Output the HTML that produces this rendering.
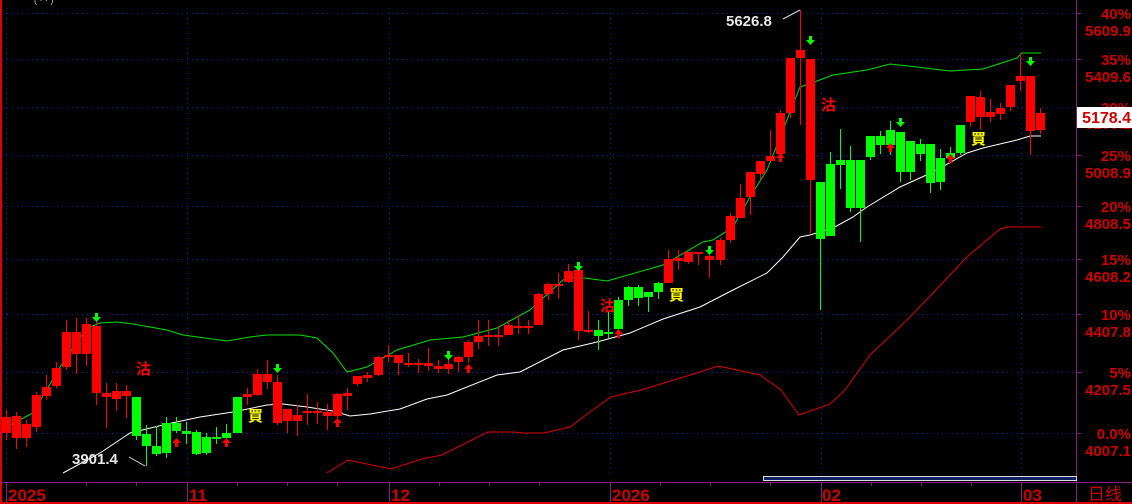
<!DOCTYPE html>
<html><head><meta charset="utf-8"><style>
html,body{margin:0;padding:0;background:#000;width:1132px;height:504px;overflow:hidden}
svg{display:block}
.ax{font-family:"Liberation Sans","Noto Sans CJK SC",sans-serif;font-weight:bold;font-size:15px;fill:#d00000}
.lb{font-family:"Liberation Sans",sans-serif;font-weight:bold;font-size:15px;fill:#e8e8e8}
.cj{font-family:"Noto Sans CJK SC","WenQuanYi Zen Hei",sans-serif;font-weight:bold;font-size:15px}
</style></head><body>
<svg width="1132" height="504" viewBox="0 0 1132 504" xmlns="http://www.w3.org/2000/svg">
<rect width="1132" height="504" fill="#000"/>
<g stroke="#1a1aa8" stroke-width="1" stroke-dasharray="1,4">
<line x1="2" y1="13.5" x2="1076" y2="13.5"/><line x1="2" y1="59.5" x2="1076" y2="59.5"/><line x1="2" y1="107.5" x2="1076" y2="107.5"/>
<line x1="2" y1="155.5" x2="1076" y2="155.5"/><line x1="2" y1="206.5" x2="1076" y2="206.5"/><line x1="2" y1="259.5" x2="1076" y2="259.5"/>
<line x1="2" y1="314.5" x2="1076" y2="314.5"/><line x1="2" y1="372.5" x2="1076" y2="372.5"/><line x1="2" y1="433.5" x2="1076" y2="433.5"/>
<line x1="6.5" y1="8" x2="6.5" y2="476"/><line x1="187.5" y1="8" x2="187.5" y2="476"/><line x1="389.5" y1="8" x2="389.5" y2="476"/>
<line x1="610.5" y1="8" x2="610.5" y2="476"/><line x1="821.5" y1="8" x2="821.5" y2="476"/><line x1="1021.5" y1="8" x2="1021.5" y2="476"/>
</g>
<rect x="0" y="0" width="2" height="504" fill="#e00000"/>
<rect x="0" y="502" width="1132" height="2" fill="#e00000"/>
<line x1="1076.5" y1="0" x2="1076.5" y2="504" stroke="#8a1a8a"/>
<line x1="0" y1="482.5" x2="1132" y2="482.5" stroke="#8a1a8a"/>
<g stroke="#8a1a8a"><line x1="1077" y1="13.5" x2="1081" y2="13.5"/><line x1="1077" y1="59.5" x2="1081" y2="59.5"/><line x1="1077" y1="107.5" x2="1081" y2="107.5"/><line x1="1077" y1="155.5" x2="1081" y2="155.5"/><line x1="1077" y1="206.5" x2="1081" y2="206.5"/><line x1="1077" y1="259.5" x2="1081" y2="259.5"/><line x1="1077" y1="314.5" x2="1081" y2="314.5"/><line x1="1077" y1="372.5" x2="1081" y2="372.5"/><line x1="1077" y1="433.5" x2="1081" y2="433.5"/>
<line x1="6.5" y1="483" x2="6.5" y2="502"/><line x1="187.5" y1="483" x2="187.5" y2="502"/><line x1="389.5" y1="483" x2="389.5" y2="502"/><line x1="610.5" y1="483" x2="610.5" y2="502"/><line x1="821.5" y1="483" x2="821.5" y2="502"/><line x1="1021.5" y1="483" x2="1021.5" y2="502"/>
<line x1="86.5" y1="483" x2="86.5" y2="486"/><line x1="136.5" y1="483" x2="136.5" y2="486"/><line x1="237.5" y1="483" x2="237.5" y2="486"/><line x1="287.5" y1="483" x2="287.5" y2="486"/><line x1="337.5" y1="483" x2="337.5" y2="486"/><line x1="439.5" y1="483" x2="439.5" y2="486"/><line x1="489.5" y1="483" x2="489.5" y2="486"/><line x1="539.5" y1="483" x2="539.5" y2="486"/><line x1="660.5" y1="483" x2="660.5" y2="486"/><line x1="710.5" y1="483" x2="710.5" y2="486"/><line x1="770.5" y1="483" x2="770.5" y2="486"/><line x1="871.5" y1="483" x2="871.5" y2="486"/><line x1="921.5" y1="483" x2="921.5" y2="486"/><line x1="971.5" y1="483" x2="971.5" y2="486"/></g>
<rect x="763.5" y="476.5" width="313" height="4" fill="#102060" stroke="#ddd" stroke-width="1"/>
<!-- bands -->
<polyline fill="none" stroke="#00e000" stroke-width="1" points="6,427 33,413 60,367 87,328 100,323 117,322 133,324 167,330 183,335 227,341 250,337 267,335 300,335 317,338 333,353 347,372 367,367 397,350 430,340 463,337 497,328 530,310 563,280 577,277 607,281 663,265 703,242 713,240 733,227 750,197 767,170 783,130 800,87 817,81 833,75 867,70 890,64 917,67 950,71 983,69 1017,58 1022,53 1041,53"/>
<polyline fill="none" stroke="#fff" stroke-width="1" points="63,473 100,453 130,433 167,424 200,417 233,412 267,405 283,404 307,407 333,411 350,416 370,414 400,409 427,399 447,395 497,375 520,372 563,350 597,342 630,333 663,319 700,307 733,290 767,273 783,257 800,237 810,235 833,228 853,217 867,207 900,187 933,172 967,153 983,148 1017,140 1030,136 1041,136"/>
<polyline fill="none" stroke="#e00000" stroke-width="1" points="327,473 348,460 391,469 422,459 442,455 488,432 514,432 524,433 544,433 570,427 590,412 611,397 641,390 700,372 718,366 760,375 781,390 799,415 830,404 845,390 870,355 907,320 933,293 967,257 1000,229 1007,227 1041,227"/>
<!-- red candles -->
<g fill="#ff0000" stroke="#ff0000">
<path d="M6.5 410V440M16.5 412V449M26.5 420V447M36.5 392V432M46.5 375V400M56.5 362V388M66.5 320V370M76.5 318V374M86.5 318V366M96.5 318V405M106.5 383V428M116.5 383V411M126.5 385V418M247.5 388V405M257.5 369V396M267.5 360V389M277.5 375V425M287.5 409V433M297.5 405V436M307.5 394V425M317.5 402V424M327.5 404V430M337.5 393V418M347.5 388V410M357.5 376V386M367.5 372V382M378.5 356V376M388.5 345V362M398.5 355V375M408.5 353V367M418.5 359V373M428.5 348V371M438.5 360V373M448.5 359V374M458.5 356V372M468.5 340V363M478.5 320V349M488.5 320V346M498.5 326V346M508.5 320V335M518.5 315V334M528.5 320V334M538.5 293V325M548.5 283V300M558.5 273V299M568.5 264V283M578.5 265V340M588.5 311V333M668.5 250V283M678.5 250V270M688.5 252V264M698.5 252V265M709.5 250V278M720.5 238V265M730.5 213V243M740.5 184V218M750.5 172V215M760.5 161V179M770.5 130V161M780.5 110V154M790.5 58V118M800.5 10V125M810.5 59V233M970.5 96V127M980.5 91V130M990.5 99V122M1000.5 103V120M1010.5 85V111M1020.5 53V91M1030.5 76V155M1040.5 108V134" fill="none"/>
<g stroke="none">
<rect x="2" y="417" width="9" height="16"/><rect x="12" y="416" width="9" height="22"/><rect x="22" y="424" width="9" height="14"/><rect x="32" y="395" width="9" height="32"/><rect x="42" y="387" width="9" height="9"/><rect x="52" y="368" width="9" height="18"/><rect x="62" y="332" width="9" height="35"/><rect x="72" y="332" width="9" height="22"/><rect x="82" y="324" width="9" height="30"/><rect x="92" y="326" width="9" height="67"/><rect x="102" y="393" width="9" height="4"/><rect x="112" y="391" width="9" height="8"/><rect x="122" y="391" width="9" height="5"/>
<rect x="243" y="394" width="9" height="3"/><rect x="253" y="374" width="9" height="21"/><rect x="263" y="374" width="9" height="8"/><rect x="273" y="382" width="9" height="41"/><rect x="283" y="409" width="9" height="12"/><rect x="293" y="415" width="9" height="6"/><rect x="303" y="411" width="9" height="2"/><rect x="313" y="411" width="9" height="2"/><rect x="323" y="412" width="9" height="4"/><rect x="333" y="394" width="9" height="22"/><rect x="343" y="393" width="9" height="3"/><rect x="353" y="376" width="9" height="8"/><rect x="363" y="375" width="9" height="3"/><rect x="374" y="357" width="9" height="18"/><rect x="384" y="355" width="9" height="2"/><rect x="394" y="355" width="9" height="8"/><rect x="404" y="363" width="9" height="2"/><rect x="414" y="363" width="9" height="2"/><rect x="424" y="363" width="9" height="3"/><rect x="434" y="366" width="9" height="3"/><rect x="444" y="364" width="9" height="5"/><rect x="454" y="357" width="9" height="5"/><rect x="464" y="342" width="9" height="15"/><rect x="474" y="336" width="9" height="6"/><rect x="484" y="335" width="9" height="2"/><rect x="494" y="335" width="9" height="2"/><rect x="504" y="325" width="9" height="10"/><rect x="514" y="326" width="9" height="2"/><rect x="524" y="326" width="9" height="2"/><rect x="534" y="294" width="9" height="31"/><rect x="544" y="284" width="9" height="10"/><rect x="554" y="284" width="9" height="2"/><rect x="564" y="271" width="9" height="11"/><rect x="574" y="270" width="9" height="61"/><rect x="584" y="330" width="9" height="2"/>
<rect x="664" y="259" width="9" height="24"/><rect x="674" y="258" width="9" height="3"/><rect x="684" y="252" width="9" height="10"/><rect x="694" y="252" width="9" height="2"/><rect x="705" y="256" width="9" height="4"/><rect x="716" y="240" width="9" height="20"/><rect x="726" y="216" width="9" height="24"/><rect x="736" y="198" width="9" height="20"/><rect x="746" y="172" width="9" height="25"/><rect x="756" y="161" width="9" height="13"/><rect x="766" y="156" width="9" height="5"/><rect x="776" y="113" width="9" height="41"/><rect x="786" y="58" width="9" height="55"/><rect x="796" y="50" width="9" height="8"/><rect x="806" y="59" width="9" height="121"/>
<rect x="966" y="96" width="9" height="26"/><rect x="976" y="97" width="9" height="20"/><rect x="986" y="112" width="9" height="5"/><rect x="996" y="108" width="9" height="6"/><rect x="1006" y="85" width="9" height="22"/><rect x="1016" y="76" width="9" height="5"/><rect x="1026" y="76" width="9" height="55"/><rect x="1036" y="113" width="9" height="17"/>
</g></g>
<!-- green candles -->
<g fill="#00ff00" stroke="#00ff00">
<path d="M136.5 397V440M146.5 425V466M156.5 426V456M166.5 417V458M176.5 417V433M186.5 422V444M196.5 430V455M206.5 433V455M216.5 427V444M226.5 424V440M237.5 397V433M598.5 320V350M608.5 312V338M618.5 297V335M628.5 286V306M638.5 285V306M648.5 292V312M658.5 282V299M820.5 182V310M830.5 152V236M840.5 129V189M850.5 146V212M860.5 160V242M870.5 136V160M880.5 131V154M890.5 121V155M900.5 132V182M910.5 141V180M920.5 139V161M930.5 144V193M940.5 149V190M950.5 147V163M960.5 125V155" fill="none"/>
<g stroke="none">
<rect x="132" y="397" width="9" height="39"/><rect x="142" y="434" width="9" height="12"/><rect x="152" y="446" width="9" height="8"/><rect x="162" y="423" width="9" height="30"/><rect x="172" y="423" width="9" height="8"/><rect x="182" y="431" width="9" height="3"/><rect x="192" y="432" width="9" height="22"/><rect x="202" y="437" width="9" height="16"/><rect x="212" y="437" width="9" height="2"/><rect x="222" y="433" width="9" height="5"/><rect x="233" y="397" width="9" height="36"/>
<rect x="594" y="330" width="9" height="6"/><rect x="604" y="332" width="9" height="2"/><rect x="614" y="300" width="9" height="29"/><rect x="624" y="287" width="9" height="13"/><rect x="634" y="287" width="9" height="11"/><rect x="644" y="292" width="9" height="5"/><rect x="654" y="283" width="9" height="9"/>
<rect x="816" y="182" width="9" height="57"/><rect x="826" y="164" width="9" height="72"/><rect x="836" y="160" width="9" height="5"/><rect x="846" y="160" width="9" height="48"/><rect x="856" y="160" width="9" height="48"/><rect x="866" y="136" width="9" height="21"/><rect x="876" y="136" width="9" height="9"/><rect x="886" y="130" width="9" height="15"/><rect x="896" y="132" width="9" height="40"/><rect x="906" y="141" width="9" height="31"/><rect x="916" y="144" width="9" height="10"/><rect x="926" y="144" width="9" height="39"/><rect x="936" y="158" width="9" height="24"/><rect x="946" y="153" width="9" height="5"/><rect x="956" y="125" width="9" height="28"/>
</g></g>
<!-- arrows -->
<g fill="#00ff00"><path d="M95 313h3v4h3l-4.5 5l-4.5-5h3z"/><path d="M276 364h3v4h3l-4.5 5l-4.5-5h3z"/><path d="M447 351h3v4h3l-4.5 5l-4.5-5h3z"/><path d="M577 262h3v4h3l-4.5 5l-4.5-5h3z"/><path d="M708 246h3v4h3l-4.5 5l-4.5-5h3z"/><path d="M809 36h3v4h3l-4.5 5l-4.5-5h3z"/><path d="M899 118h3v4h3l-4.5 5l-4.5-5h3z"/><path d="M1029 57h3v4h3l-4.5 5l-4.5-5h3z"/></g>
<g fill="#ff0000"><path d="M175 447h3v-4h3l-4.5-5l-4.5 5h3z"/><path d="M225 447h3v-4h3l-4.5-5l-4.5 5h3z"/><path d="M336 427h3v-4h3l-4.5-5l-4.5 5h3z"/><path d="M467 373h3v-4h3l-4.5-5l-4.5 5h3z"/><path d="M617 338h3v-4h3l-4.5-5l-4.5 5h3z"/><path d="M889 152h3v-4h3l-4.5-5l-4.5 5h3z"/><path d="M949 163h3v-4h3l-4.5-5l-4.5 5h3z"/><path d="M779 162h3v-4h3l-4.5-5l-4.5 5h3z"/></g>
<text class="cj" x="136" y="374" fill="#ff0000">沽</text>
<text class="cj" x="600" y="311" fill="#ff0000">沽</text>
<text class="cj" x="821" y="110" fill="#ff0000">沽</text>
<text class="cj" x="248" y="421" fill="#ffff00">買</text>
<text class="cj" x="669" y="300" fill="#ffff00">買</text>
<text class="cj" x="971" y="144" fill="#ffff00">買</text>
<text class="lb" x="726" y="26">5626.8</text>
<line x1="783" y1="19" x2="800" y2="10" stroke="#ddd"/>
<text class="lb" x="72" y="464">3901.4</text>
<line x1="129" y1="457" x2="145" y2="466" stroke="#ddd"/>
<g class="ax" text-anchor="end">
<text x="1131" y="19">40%</text><text x="1131" y="36">5609.9</text>
<text x="1131" y="65">35%</text><text x="1131" y="82">5409.6</text>
<text x="1131" y="113">30%</text><text x="1131" y="129">5209.2</text>
<text x="1131" y="161">25%</text><text x="1131" y="178">5008.9</text>
<text x="1131" y="212">20%</text><text x="1131" y="229">4808.5</text>
<text x="1131" y="265">15%</text><text x="1131" y="282">4608.2</text>
<text x="1131" y="320">10%</text><text x="1131" y="337">4407.8</text>
<text x="1131" y="378">5%</text><text x="1131" y="395">4207.5</text>
<text x="1131" y="439">0.0%</text><text x="1131" y="456">4007.1</text>
</g>
<rect x="1077" y="107" width="55" height="21" fill="#fff"/>
<text class="ax" x="1131" y="123" text-anchor="end" style="font-size:16px" fill="#e00000">5178.4</text>
<g class="ax" style="font-size:17px">
<text x="8" y="501">2025</text><text x="189" y="501">11</text><text x="391" y="501">12</text><text x="612" y="501">2026</text><text x="822" y="501">02</text><text x="1023" y="501">03</text>
<text x="1088" y="500" style="font-weight:normal;font-family:'Noto Sans CJK SC',sans-serif">日线</text>
</g>
<text x="34" y="3" fill="#bbb" style="font-size:9px;font-family:'Liberation Sans',sans-serif">( ·  · )</text>
</svg>
</body></html>
